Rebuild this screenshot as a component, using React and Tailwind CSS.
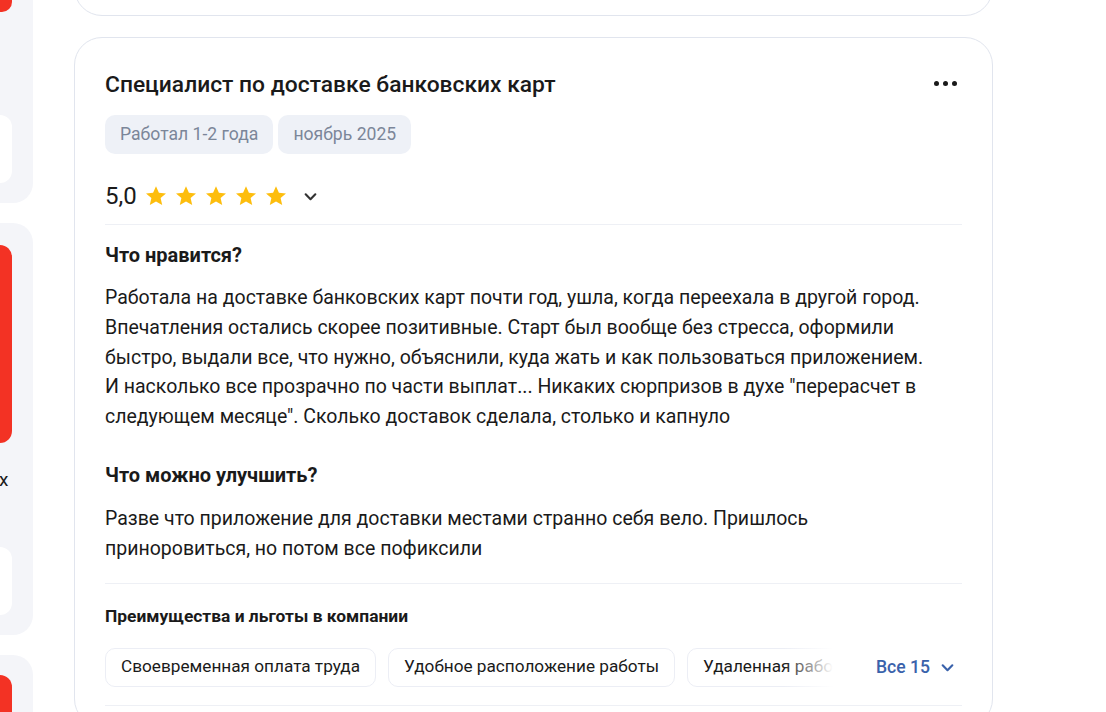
const Star = () => (
  <svg width="24" height="24" viewBox="0 0 24 24" className="shrink-0">
    <path
      d="M12 2.2l2.9 6.6 7.1.6-5.4 4.7 1.6 7-6.2-3.7-6.2 3.7 1.6-7L2 9.4l7.1-.6z"
      fill="#fdbd0d"
    />
  </svg>
);

const Chevron = ({ className, color = "#333" }) => (
  <svg width="15" height="15" viewBox="0 0 14 14" className={className}>
    <path
      d="M2.5 5l4.5 4.5L11.5 5"
      fill="none"
      stroke={color}
      strokeWidth="2"
      strokeLinecap="round"
      strokeLinejoin="round"
    />
  </svg>
);

const perks = [
  "Своевременная оплата труда",
  "Удобное расположение работы",
  "Удаленная работа",
];

const Sidebar = () => (
  <div className="w-[33px] shrink-0 flex flex-col gap-5">
    <div className="shrink-0 -mt-[100px] h-[303px] bg-[#f4f5f9] rounded-r-[20px]">
      <div className="h-[112px] w-[12px] bg-[#f33224] rounded-br-[10px]" />
      <div className="mt-[103px] h-[68px] w-[12px] bg-white rounded-r-[12px]" />
    </div>
    <div className="shrink-0 h-[412px] bg-[#f4f5f9] rounded-r-[20px] pt-[22px]">
      <div className="h-[198px] w-[12px] bg-[#f33224] rounded-r-[12px]" />
      <div className="mt-[25px] text-[19px] leading-[24px] text-[#1a1a1a] -ml-[1px]">х</div>
      <div className="mt-[55px] h-[68px] w-[12px] bg-white rounded-r-[12px]" />
    </div>
    <div className="shrink-0 h-[200px] bg-[#f4f5f9] rounded-tr-[20px] pt-[20px]">
      <div className="h-[100px] w-[12px] bg-[#f33224] rounded-tr-[12px]" />
    </div>
  </div>
);

export default function App() {
  return (
    <div
      className="w-[1106px] h-[712px] overflow-hidden bg-white flex items-start text-[#1a1a1a]"
      style={{ fontFamily: "Roboto, 'Liberation Sans', sans-serif" }}
    >
      <Sidebar />
      <div className="ml-[41px] w-[919px] shrink-0 flex flex-col gap-[21px]">
        <div className="shrink-0 -mt-[44px] h-[60px] border border-[#e1e5ee] rounded-[28px]" />
        <div className="shrink-0 border border-[#e1e5ee] rounded-[28px] px-[30px] pt-[32px] pb-[20px]">
          <div className="flex items-start justify-between">
            <h2 className="text-[22.8px] leading-[30px] font-medium">
              Специалист по доставке банковских карт
            </h2>
            <div className="flex gap-[4px] mt-[11px] mr-[5px]">
              <span className="w-[5px] h-[5px] rounded-full bg-[#1a1a1a]" />
              <span className="w-[5px] h-[5px] rounded-full bg-[#1a1a1a]" />
              <span className="w-[5px] h-[5px] rounded-full bg-[#1a1a1a]" />
            </div>
          </div>
          <div className="flex gap-[5px] mt-[15px]">
            <span className="h-[39px] px-[15px] flex items-center rounded-[10px] bg-[#eef1f7] text-[#7b8699] text-[17.6px]">
              Работал 1-2 года
            </span>
            <span className="h-[39px] px-[15px] flex items-center rounded-[10px] bg-[#eef1f7] text-[#7b8699] text-[17.6px]">
              ноябрь 2025
            </span>
          </div>
          <div className="flex items-center mt-[27px] h-[30px]">
            <span className="text-[24px] mr-[7px]">5,0</span>
            <div className="flex gap-[6px]">
              <Star />
              <Star />
              <Star />
              <Star />
              <Star />
            </div>
            <Chevron className="ml-[15px]" />
          </div>
          <div className="h-px bg-[#eef0f5] mt-[13px]" />
          <h3 className="mt-[17px] text-[20px] leading-[26px] font-bold">
            Что нравится?
          </h3>
          <p className="mt-[15px] text-[19.5px] leading-[29.8px] whitespace-nowrap">
            Работала на доставке банковских карт почти год, ушла, когда переехала в другой город.
            <br />
            Впечатления остались скорее позитивные. Старт был вообще без стресса, оформили
            <br />
            быстро, выдали все, что нужно, объяснили, куда жать и как пользоваться приложением.
            <br />
            И насколько все прозрачно по части выплат... Никаких сюрпризов в духе "перерасчет в
            <br />
            следующем месяце". Сколько доставок сделала, столько и капнуло
          </p>
          <h3 className="mt-[30px] text-[20px] leading-[26px] font-bold">
            Что можно улучшить?
          </h3>
          <p className="mt-[16px] text-[19.5px] leading-[29.8px] whitespace-nowrap">
            Разве что приложение для доставки местами странно себя вело. Пришлось
            <br />
            приноровиться, но потом все пофиксили
          </p>
          <div className="h-px bg-[#eef0f5] mt-[19px]" />
          <h4 className="mt-[20px] text-[17.4px] leading-[24px] font-bold">
            Преимущества и льготы в компании
          </h4>
          <div className="flex items-center mt-[20px]">
            <div className="relative flex gap-[12px] w-[728px] overflow-hidden">
              {perks.map((p) => (
                <span
                  key={p}
                  className="shrink-0 h-[39px] px-[15px] flex items-center rounded-[10px] border border-[#eceef5] text-[17.2px] whitespace-nowrap"
                >
                  {p}
                </span>
              ))}
              <div className="absolute right-0 top-0 h-full w-[50px] bg-gradient-to-r from-white/0 to-white" />
            </div>
            <button className="ml-[43px] flex items-center gap-[10px] text-[#3a62ab] text-[17.6px] font-medium">
              Все 15
              <Chevron color="#3a62ab" />
            </button>
          </div>
          <div className="h-px bg-[#eef0f5] mt-[18px]" />
        </div>
      </div>
    </div>
  );
}
